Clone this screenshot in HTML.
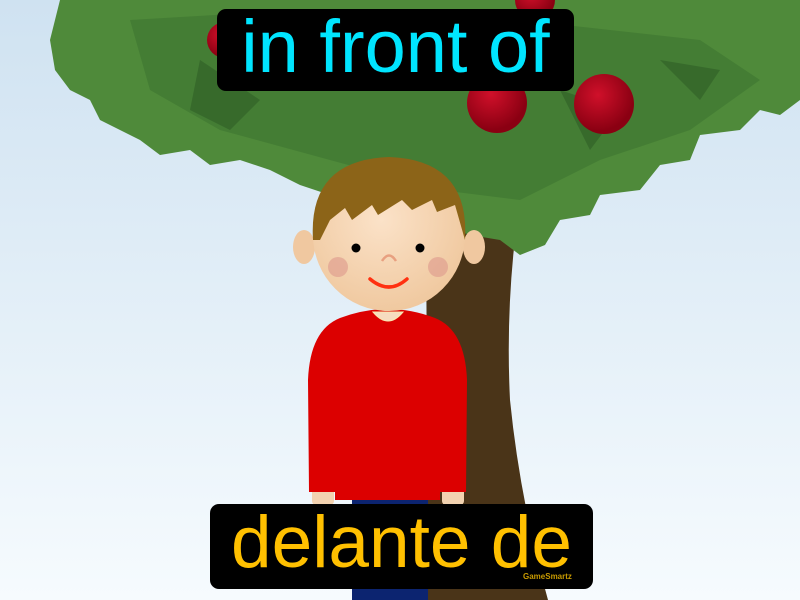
<!DOCTYPE html>
<html><head><style>
html,body{margin:0;padding:0;width:800px;height:600px;overflow:hidden}
.lbl{position:absolute;background:#000;border-radius:9px;text-align:center;font-family:"Liberation Sans",sans-serif;white-space:nowrap}
</style></head><body>
<svg width="800" height="600" style="position:absolute;left:0;top:0">
<defs>
<linearGradient id="sky" x1="0" y1="0" x2="0" y2="1"><stop offset="0" stop-color="#cfe2f1"/><stop offset="1" stop-color="#f6fbfe"/></linearGradient>
<radialGradient id="face" cx="0.45" cy="0.4" r="0.6"><stop offset="0" stop-color="#fbe2c8"/><stop offset="1" stop-color="#f0c9a0"/></radialGradient>
<radialGradient id="apple" cx="0.4" cy="0.35" r="0.6"><stop offset="0" stop-color="#d0102a"/><stop offset="1" stop-color="#8a0012"/></radialGradient>
</defs>
<rect width="800" height="600" fill="url(#sky)"/>
<path d="M425 200 L520 200 Q505 300 510 400 Q520 500 548 600 L420 600 Q430 450 425 200Z" fill="#4a3418"/>
<path d="M300 150 L330 170 L380 210 L370 220 L320 180Z" fill="#6b4a24"/>
<path d="M60 0 L800 0 L800 100 L780 115 L760 110 L740 130 L700 135 L690 160 L660 165 L640 190 L600 195 L590 215 L560 220 L545 245 L520 255 L500 240 L470 235 L440 225 L400 230 L360 205 L330 195 L300 185 L270 170 L240 160 L210 165 L190 150 L160 155 L140 140 L120 130 L100 120 L90 100 L70 90 L55 70 L50 40 Z" fill="#4f8a3a"/>
<path d="M130 20 L300 10 L420 40 L520 20 L700 40 L760 80 L690 130 L600 160 L520 200 L440 190 L330 160 L220 130 L150 90Z" fill="#3e7530" opacity="0.6"/>
<path d="M200 60 L260 100 L230 130 L190 110Z M560 90 L620 110 L590 150 Z M660 60 L720 70 L700 100Z" fill="#2f5e26" opacity="0.6"/>
<circle cx="497" cy="103" r="30" fill="url(#apple)"/>
<circle cx="604" cy="104" r="30" fill="url(#apple)"/>
<circle cx="225" cy="40" r="18" fill="url(#apple)"/>
<circle cx="535" cy="0" r="20" fill="url(#apple)"/>
<rect x="352" y="495" width="76" height="105" fill="#0c2470"/>
<rect x="312" y="485" width="22" height="20" rx="4" fill="#f2d2b0"/>
<rect x="442" y="485" width="22" height="20" rx="4" fill="#f2d2b0"/>
<path d="M340 318 Q388 300 435 318 Q465 330 467 380 L466 492 L440 492 L440 500 L335 500 L335 492 L309 492 L308 380 Q310 330 340 318Z" fill="#dc0000"/>
<path d="M373 312 Q388 330 403 312Z" fill="#f6dcc0" stroke="#f8e8b0"/>
<ellipse cx="304" cy="247" rx="11" ry="17" fill="#f0c8a0"/>
<ellipse cx="474" cy="247" rx="11" ry="17" fill="#f0c8a0"/>
<circle cx="389" cy="235" r="76" fill="url(#face)"/>
<path d="M313 240 Q308 160 389 157 Q470 160 465 240 L455 205 L437 212 L432 200 L412 210 L402 200 L378 215 L372 205 L352 220 L345 208 L330 220 L320 240Z" fill="#8c6418"/>
<circle cx="356" cy="248" r="4.5" fill="#000"/>
<circle cx="420" cy="248" r="4.5" fill="#000"/>
<circle cx="338" cy="267" r="10" fill="#e0a090" opacity="0.7"/>
<circle cx="438" cy="267" r="10" fill="#e0a090" opacity="0.7"/>
<path d="M382 261 Q389 250 396 261" fill="none" stroke="#e8a080" stroke-width="2.5"/>
<path d="M370 279 Q389 295 407 279" fill="none" stroke="#ff3010" stroke-width="3.5" stroke-linecap="round"/>
</svg>
<div class="lbl" style="left:217px;top:9px;width:357px;height:82px;color:#00e5ff;font-size:74px;line-height:76px;">in front of</div>
<div class="lbl" style="left:210px;top:504px;width:383px;height:85px;color:#ffc000;font-size:73px;line-height:78px;">delante de
<span style="position:absolute;left:313px;top:68px;font-size:8px;line-height:10px;color:#c89a00;font-weight:bold">GameSmartz</span></div>
</body></html>
